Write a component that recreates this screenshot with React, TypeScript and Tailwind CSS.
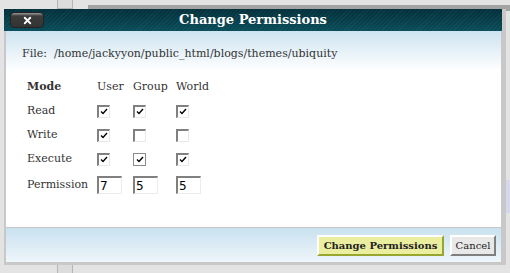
import { X } from 'lucide-react';

type Cell = { checked: boolean; flat?: boolean };

const rows: { label: string; cells: Cell[] }[] = [
  { label: 'Read', cells: [{ checked: true }, { checked: true }, { checked: true }] },
  { label: 'Write', cells: [{ checked: true }, { checked: false }, { checked: false }] },
  { label: 'Execute', cells: [{ checked: true }, { checked: true, flat: true }, { checked: true }] },
];

function Check({ checked, flat }: Cell) {
  return (
    <span
      className={
        flat
          ? 'flex h-[13px] w-[13px] items-center justify-center border border-[#8a8a8a] bg-white'
          : 'flex h-[13px] w-[13px] items-center justify-center border-t-2 border-l-2 border-t-[#808080] border-l-[#808080] border-r border-b border-r-[#e8e8e8] border-b-[#e8e8e8] bg-white'
      }
    >
      {checked && (
        <svg width="8" height="7" viewBox="0 0 8 7">
          <path d="M1 3.5 L3 5.5 L7 1" fill="none" stroke="#000" strokeWidth="1.4" />
        </svg>
      )}
    </span>
  );
}

function PermInput({ value }: { value: string }) {
  return (
    <span className="flex h-[18px] w-[25px] items-center border-t-2 border-l-2 border-t-[#808080] border-l-[#808080] border-r border-b border-r-[#ececec] border-b-[#ececec] bg-white pl-[1px] font-['DejaVu_Sans',sans-serif] text-[12px] leading-none text-black">
      {value}
    </span>
  );
}

export default function App() {
  return (
    <div className="relative h-[273px] w-[510px] overflow-hidden bg-[#e3e3e3] font-['DejaVu_Serif',serif] text-[#333]">
      {/* page behind the dialog */}
      <div className="absolute left-[57px] top-0 h-[9px] w-[16px] border-x border-b border-[#b5b5b5] bg-[#dcdcdc]" />
      <div className="absolute left-[88px] top-[5px] h-[6px] w-[422px] bg-[#a3a3a3]" />
      <div className="absolute bottom-0 left-[57px] h-[9px] w-[16px] border-x border-t border-[#b5b5b5] bg-[#dcdcdc]" />
      <div className="absolute left-[506px] top-[180px] h-[33px] w-[4px] bg-[#d6d6ec]" />

      <div className="relative ml-[4px] mt-[9px] w-[502px] bg-[#c8c8c8] pb-[3px] pr-[4px]">
        <div className="relative flex h-[22px] items-center justify-center bg-[repeating-linear-gradient(135deg,rgba(255,255,255,0.04)_0px,rgba(255,255,255,0.04)_1px,transparent_1px,transparent_3px),linear-gradient(#03303b,#0a4c59)]">
          <button className="absolute left-[6px] top-[3px] flex h-[16px] w-[34px] items-center justify-center rounded-[4px] border border-[#222] bg-[linear-gradient(#9a9a9a_0px,#5a5a5a_2px,#3c3c3c_3px,#333_100%)]">
            <X size={11} color="#fff" strokeWidth={4} />
          </button>
          <span className="text-[13px] font-bold text-white">Change Permissions</span>
        </div>

        <div className="ml-[2px] mr-[1px] h-[196px] bg-[linear-gradient(#cde3f0_0px,#ffffff_40px)] px-[16px] pt-[15px]">
          <p className="text-[11px] leading-[16px]">File:&nbsp; /home/jackyyon/public_html/blogs/themes/ubiquity</p>
          <table className="ml-[5px] mt-[13px] border-collapse text-[11px]">
            <tbody>
              <tr className="h-[24px]">
                <td className="w-[70px] font-bold">Mode</td>
                <td className="w-[36px]">User</td>
                <td className="w-[43px]">Group</td>
                <td>World</td>
              </tr>
              {rows.map((r) => (
                <tr key={r.label} className="h-[24px]">
                  <td>{r.label}</td>
                  {r.cells.map((c, i) => (
                    <td key={i}>
                      <Check {...c} />
                    </td>
                  ))}
                </tr>
              ))}
              <tr className="h-[28px]">
                <td>Permission</td>
                <td><PermInput value="7" /></td>
                <td><PermInput value="5" /></td>
                <td><PermInput value="5" /></td>
              </tr>
            </tbody>
          </table>
        </div>

        <div className="ml-[2px] mr-[1px] mt-[1px] flex h-[34px] items-start justify-end gap-[6px] bg-[linear-gradient(#c9e1ef,#eef6fa)] pr-[5px] pt-[7px]">
          <button className="h-[21px] w-[127px] border-2 border-t-white border-l-white border-r-[#97a62e] border-b-[#97a62e] bg-[#ebee9f] text-[10px] font-bold text-[#222]">
            Change Permissions
          </button>
          <button className="h-[21px] w-[46px] border-2 border-t-white border-l-white border-r-[#7f7f7f] border-b-[#7f7f7f] bg-[#e8e8e8] text-[10px] text-[#222]">
            Cancel
          </button>
        </div>
      </div>
    </div>
  );
}
